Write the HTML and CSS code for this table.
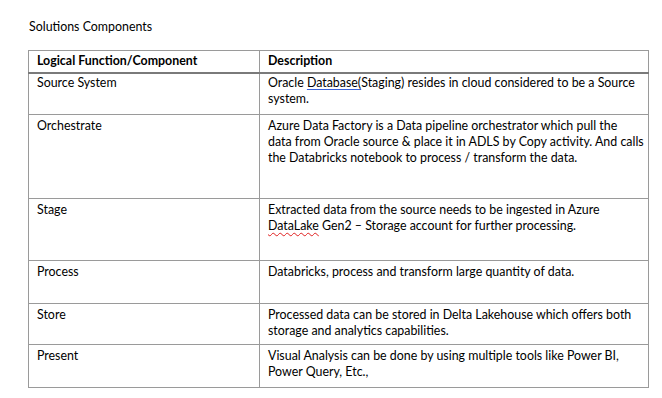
FILE: index.html
```html
<!DOCTYPE html>
<html lang="en">
<head>
<meta charset="utf-8">
<title>Solutions Components</title>
<link rel="stylesheet" href="styles.css">
</head>
<body>
<div class="page">
  <p class="title">Solutions Components</p>
  <table class="components">
    <colgroup>
      <col class="col-func">
      <col class="col-desc">
    </colgroup>
    <thead>
      <tr class="row-head">
        <th>Logical Function/Component</th>
        <th>Description</th>
      </tr>
    </thead>
    <tbody>
      <tr class="row-source">
        <td>Source System</td>
        <td>Oracle <span class="grammar">Database(</span>Staging) resides in cloud considered to be a Source<br>system.</td>
      </tr>
      <tr class="row-orch">
        <td>Orchestrate</td>
        <td>Azure Data Factory is a Data pipeline orchestrator which pull the<br>data from Oracle source &amp; place it in ADLS by Copy activity. And calls<br>the Databricks notebook to process / transform the data.</td>
      </tr>
      <tr class="row-stage">
        <td>Stage</td>
        <td>Extracted data from the source needs to be ingested in Azure<br><span class="spell">DataLake</span> Gen2 – Storage account for further processing.</td>
      </tr>
      <tr class="row-process">
        <td>Process</td>
        <td>Databricks, process and transform large quantity of data.</td>
      </tr>
      <tr class="row-store">
        <td>Store</td>
        <td>Processed data can be stored in Delta Lakehouse which offers both<br>storage and analytics capabilities.</td>
      </tr>
      <tr class="row-present">
        <td>Present</td>
        <td>Visual Analysis can be done by using multiple tools like Power BI,<br>Power Query, Etc.,</td>
      </tr>
    </tbody>
  </table>
</div>
</body>
</html>
```

FILE: styles.css
```css
html, body {
  margin: 0;
  padding: 0;
  background: #ffffff;
}

body {
  font-family: Lato, "Open Sans", "Liberation Sans", sans-serif;
  font-size: 12.4px;
  color: #000000;
}

.page {
  padding: 19px 0 0 28px;
}

.title {
  margin: 0 0 0 1px;
  line-height: 16px;
  height: 31px;
}

.components {
  border-collapse: collapse;
  table-layout: fixed;
  width: 620px;
}

.col-func { width: 231px; }
.col-desc { width: 389px; }

.components th,
.components td {
  border: 1px solid #9a9a9a;
  padding: 3px 8px 0 8px;
  line-height: 16px;
  vertical-align: top;
  text-align: left;
  white-space: nowrap;
  box-sizing: border-box;
}

.components th {
  font-weight: 700;
  border-bottom: 2px solid #7a7a7a;
  padding-top: 2px;
}

.row-head th { height: 22px; }
.row-source td { height: 42px; padding-top: 1px; }
.row-orch td { height: 84px; }
.row-stage td { height: 62px; }
.row-process td { height: 43px; }
.row-store td { height: 41px; }
.row-present td { height: 43px; }

.grammar {
  text-decoration: underline;
  text-decoration-color: #3a63d8;
  text-underline-offset: 2px;
}

.spell {
  text-decoration: underline wavy #e02020;
  text-decoration-thickness: 1px;
  text-underline-offset: 2px;
}
```
